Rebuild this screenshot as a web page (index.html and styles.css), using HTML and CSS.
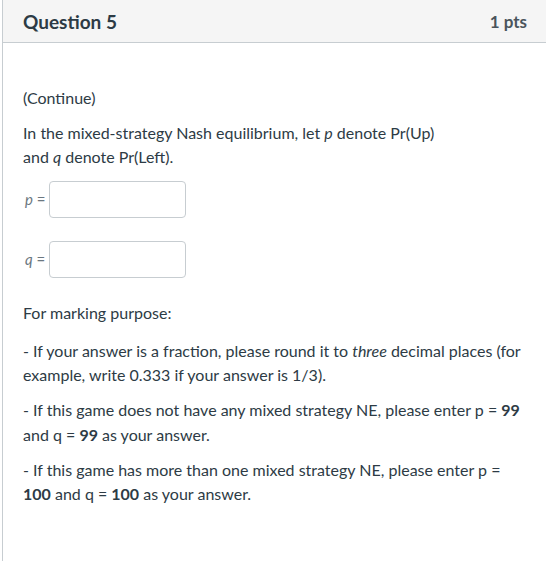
FILE: index.html
```html
<!DOCTYPE html>
<html>
<head>
<meta charset="utf-8">
<link rel="stylesheet" href="styles.css">
</head>
<body>
<div class="question">
  <div class="header">
    <span class="title">Question 5</span>
    <span class="pts">1 pts</span>
  </div>
  <div class="content">
    <p>(Continue)</p>
    <p>In the mixed-strategy Nash equilibrium, let <em>p</em> denote Pr(Up)<br>and <em>q</em> denote Pr(Left).</p>
    <div class="field first"><span class="var"><em>p</em> =</span><input class="box" type="text"></div>
    <div class="field"><span class="var"><em>q</em> =</span><input class="box" type="text"></div>
    <p class="mark">For marking purpose:</p>
    <p>- If your answer is a fraction, please round it to <em>three</em> decimal places (for example, write 0.333 if your answer is 1/3).</p>
    <p>- If this game does not have any mixed strategy NE, please enter p = <strong>99</strong> and q = <strong>99</strong> as your answer.</p>
    <p>- If this game has more than one mixed strategy NE, please enter p = <strong>100</strong> and q = <strong>100</strong> as your answer.</p>
  </div>
</div>
</body>
</html>
```
FILE: styles.css
```css
html, body {
  margin: 0;
  padding: 0;
  background: #fff;
}
body {
  font-family: Lato, "Liberation Sans", sans-serif;
  color: #2d3b45;
}
.question {
  margin-left: 2px;
  border-left: 1px solid #c7cdd1;
  min-height: 561px;
  box-sizing: border-box;
}
.header {
  display: flex;
  justify-content: space-between;
  align-items: center;
  height: 42px;
  background: #f5f5f5;
  border-bottom: 1px solid #c7cdd1;
  padding: 0 19px 0 20px;
}
.title {
  font-size: 19px;
  font-weight: 700;
}
.pts {
  font-size: 17px;
  font-weight: 700;
  color: #4a545c;
}
.content {
  padding: 42.5px 20px 0 20px;
  font-size: 16px;
  line-height: 24.5px;
}
.content p {
  margin: 0 0 10.5px 0;
}
.field {
  display: flex;
  align-items: center;
  margin: 0 0 23px 0;
  height: 37px;
}
.field.first {
  margin-top: 11px;
}
.var {
  font-size: 15px;
  color: #6b7780;
  width: 24px;
  padding-left: 2px;
}
.box {
  width: 137px;
  height: 37px;
  box-sizing: border-box;
  border: 1px solid #c7cdd1;
  border-radius: 4px;
  margin: 0;
  padding: 0;
  background: #fff;
}
.content p.mark {
  margin-bottom: 13.5px;
}
```
